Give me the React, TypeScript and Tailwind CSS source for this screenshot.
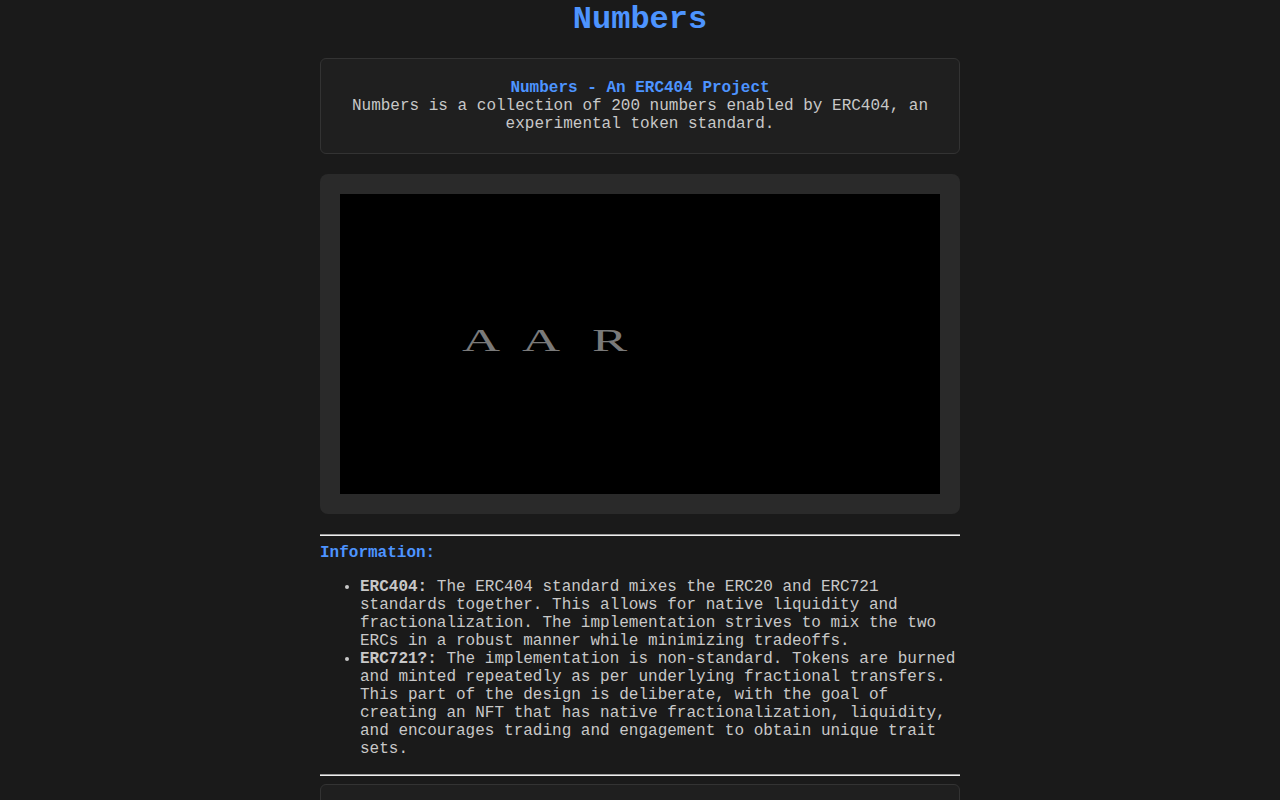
export default function App() {
    return (
        <div className="min-h-screen bg-[#1a1a1a] font-['Liberation_Mono',monospace] text-[16px] leading-[18px] text-[#c8c8c8]">
            <h1 className="pt-[2px] text-center text-[32px] font-bold leading-[36px] text-[#4d94ff]">
                Numbers
            </h1>
            <div className="mx-auto mt-[20px] w-[640px]">
                <div className="rounded-md border border-[#333333] bg-[#1f1f1f] px-5 py-5 text-center">
                    <div className="font-bold text-[#4d94ff]">
                        Numbers - An ERC404 Project
                    </div>
                    <p>
                        Numbers is a collection of 200 numbers enabled by
                        ERC404, an experimental token standard.
                    </p>
                </div>

                <div className="mt-5 rounded-lg bg-[#2a2a2a] p-5">
                    <div className="flex h-[300px] w-[600px] items-center bg-black pb-[8px] pl-[122px] font-['Liberation_Serif',serif] text-[32px] leading-none text-[#7a7a7a]">
                        <span className="inline-block w-[40px] origin-left scale-x-[1.65]">
                            A
                        </span>
                        <span className="ml-[20px] inline-block w-[40px] origin-left scale-x-[1.65]">
                            A
                        </span>
                        <span className="ml-[30px] inline-block w-[40px] origin-left scale-x-[1.65]">
                            R
                        </span>
                    </div>
                </div>

                <hr className="mt-5 border-t border-b border-t-[#9a9a9a] border-b-[#eeeeee]" />
                <div className="mt-2 font-bold text-[#4d94ff]">
                    Information:
                </div>
                <ul className="mt-4 list-disc pl-10">
                    <li>
                        <b>ERC404:</b> The ERC404 standard mixes the ERC20 and
                        ERC721 standards together. This allows for native
                        liquidity and fractionalization. The implementation
                        strives to mix the two ERCs in a robust manner while
                        minimizing tradeoffs.
                    </li>
                    <li>
                        <b>ERC721?:</b> The implementation is non-standard.
                        Tokens are burned and minted repeatedly as per
                        underlying fractional transfers. This part of the
                        design is deliberate, with the goal of creating an NFT
                        that has native fractionalization, liquidity, and
                        encourages trading and engagement to obtain unique
                        trait sets.
                    </li>
                </ul>
                <hr className="mt-4 border-t border-b border-t-[#9a9a9a] border-b-[#eeeeee]" />
                <div className="mt-2 h-[120px] rounded-md border border-[#333333] bg-[#1f1f1f]" />
            </div>
        </div>
    );
}
